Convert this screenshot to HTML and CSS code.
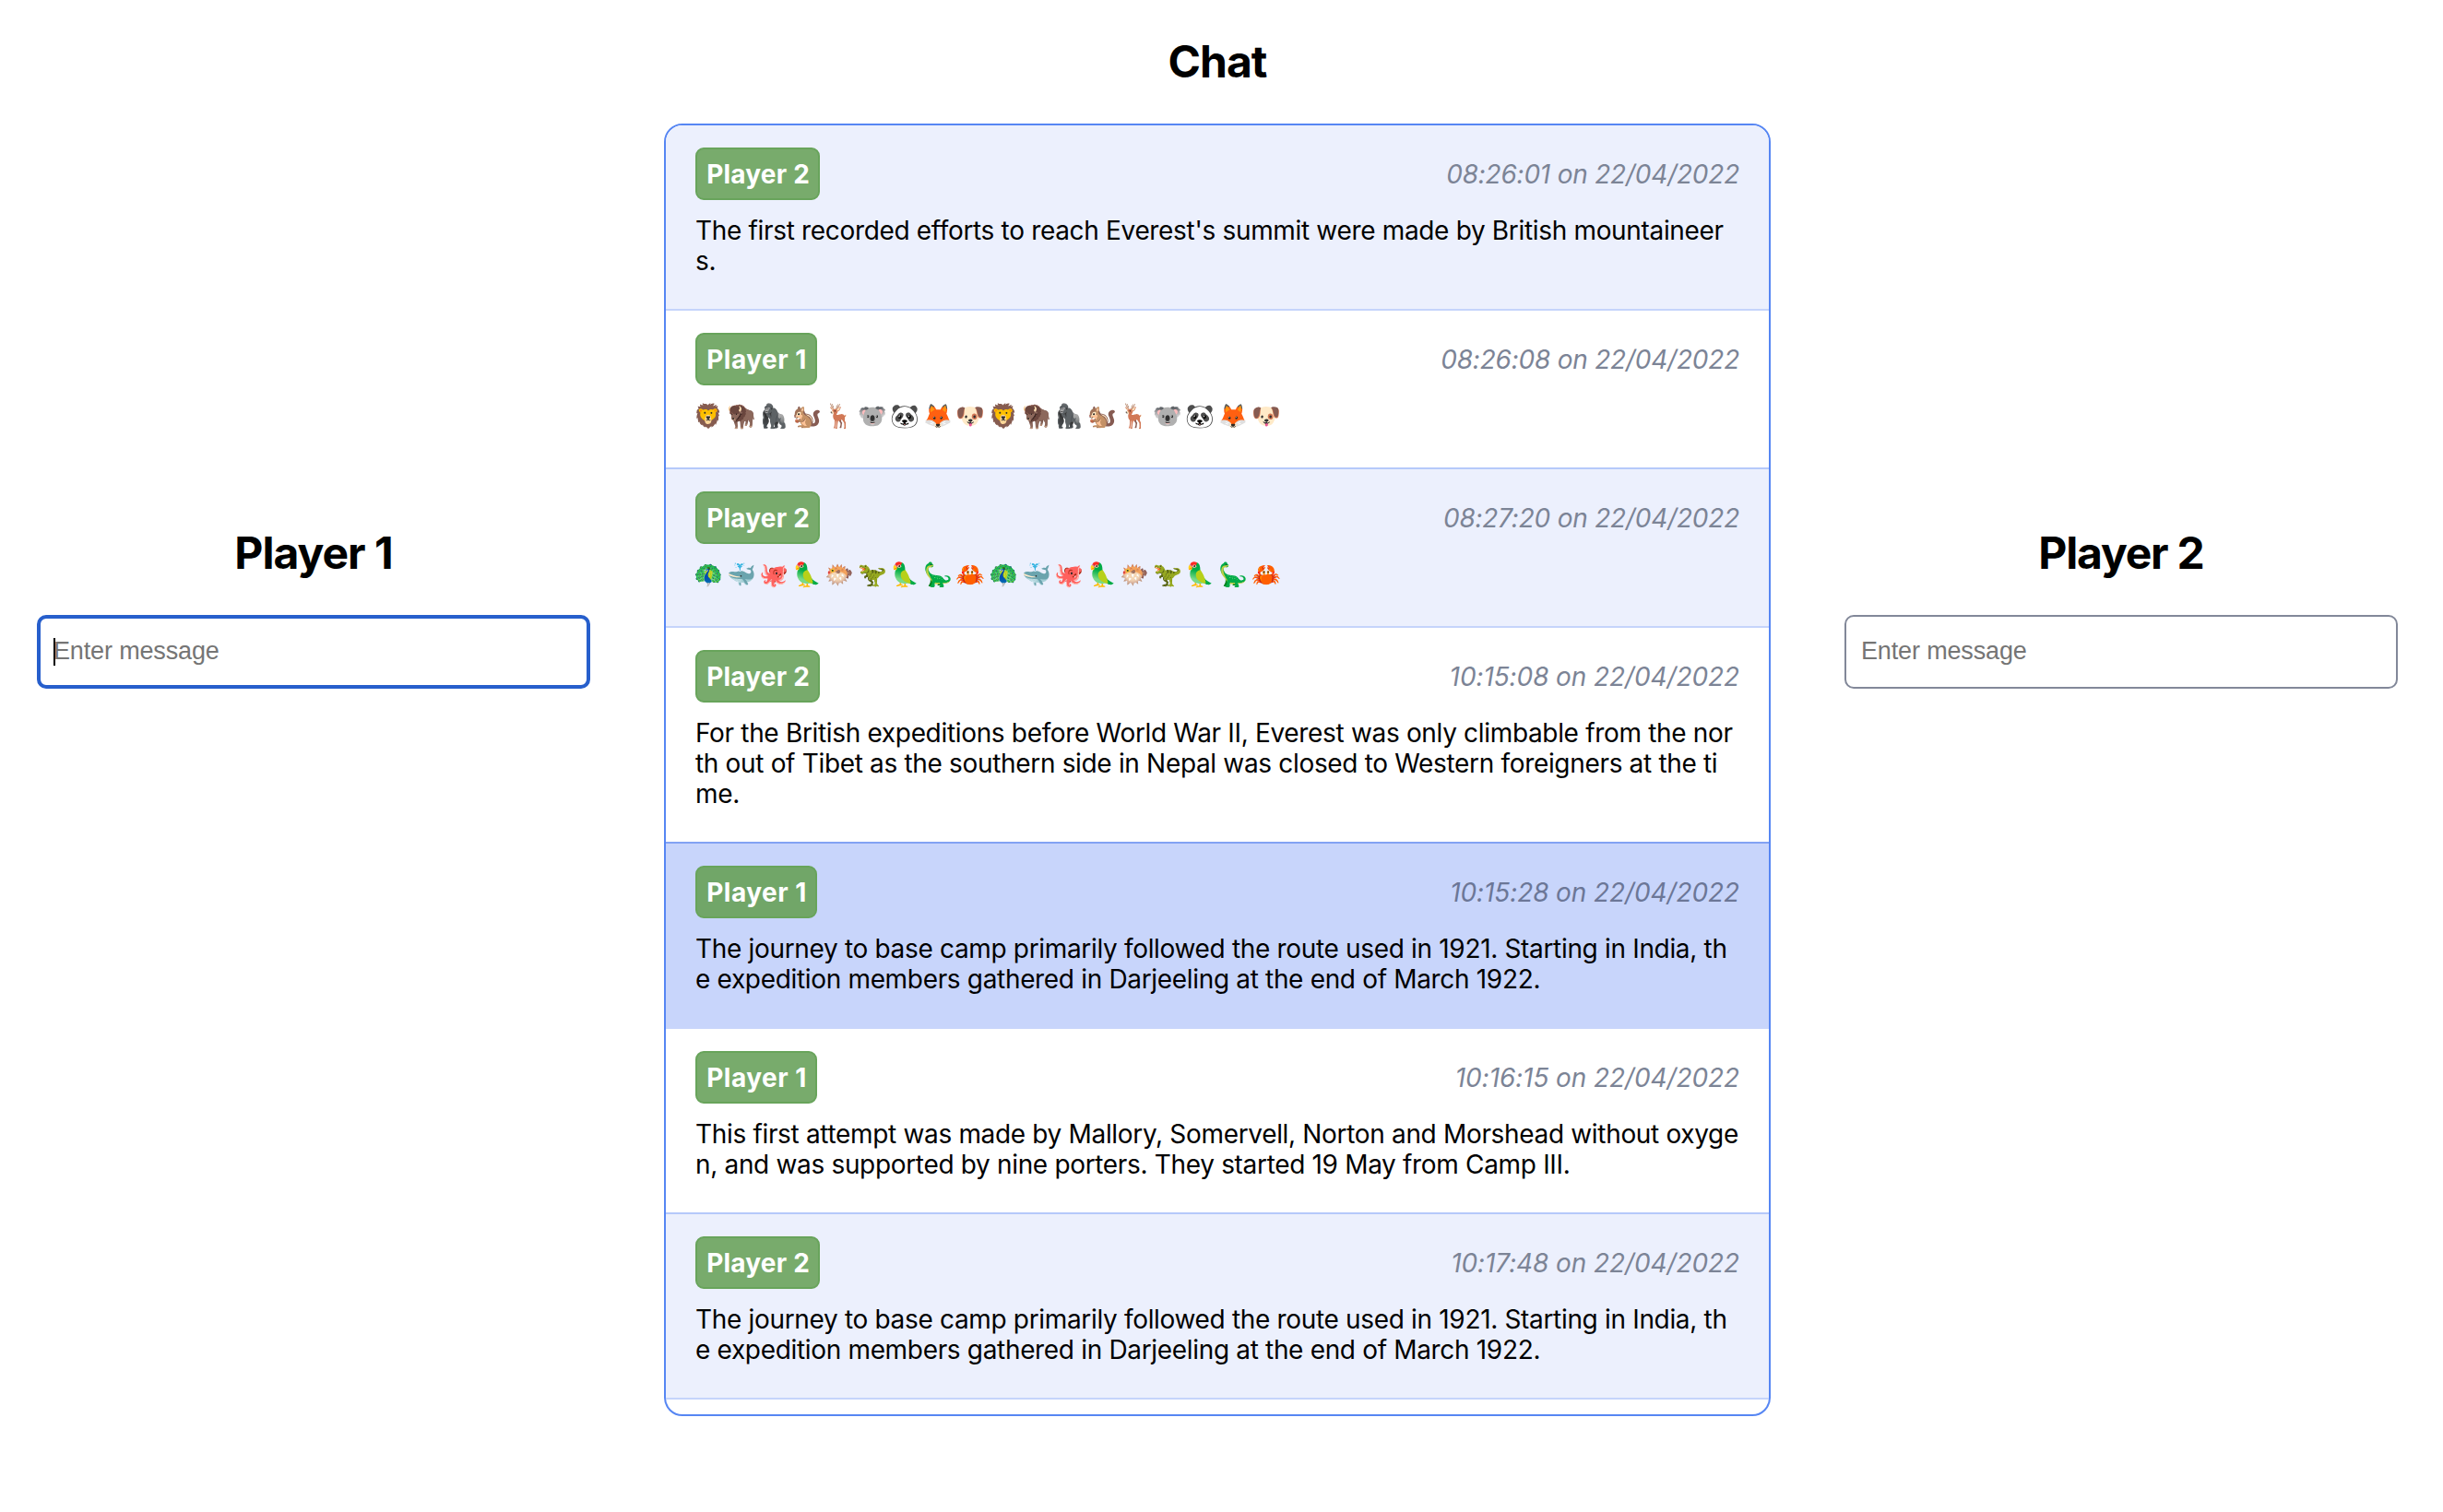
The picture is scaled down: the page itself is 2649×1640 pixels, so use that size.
FILE: index.html
```html
<!DOCTYPE html>
<html lang="en">
<head>
<meta charset="utf-8">
<title>Chat</title>
<link rel="stylesheet" href="styles.css">
</head>
<body>
<main class="layout">
  <section class="player player-one">
    <h2 class="heading">Player 1</h2>
    <div class="field focused"><input class="input" type="text" placeholder="Enter message"></div>
  </section>

  <section class="chat">
    <h2 class="heading chat-heading">Chat</h2>
    <div class="messages">
      <article class="message tinted">
        <header class="meta"><span class="badge">Player 2</span><time class="time">08:26:01 on 22/04/2022</time></header>
        <p class="text">The first recorded efforts to reach Everest's summit were made by British mountaineer<br>s.</p>
      </article>
      <article class="message">
        <header class="meta"><span class="badge badge-one">Player 1</span><time class="time">08:26:08 on 22/04/2022</time></header>
        <p class="text emoji">🦁🦬🦍🐿️🦌🐨🐼🦊🐶🦁🦬🦍🐿️🦌🐨🐼🦊🐶</p>
      </article>
      <article class="message tinted">
        <header class="meta"><span class="badge">Player 2</span><time class="time">08:27:20 on 22/04/2022</time></header>
        <p class="text emoji">🦚🐳🐙🦜🐡🦖🦜🦕🦀🦚🐳🐙🦜🐡🦖🦜🦕🦀</p>
      </article>
      <article class="message before-selected">
        <header class="meta"><span class="badge">Player 2</span><time class="time time-short">10:15:08 on 22/04/2022</time></header>
        <p class="text">For the British expeditions before World War II, Everest was only climbable from the nor<br>th out of Tibet as the southern side in Nepal was closed to Western foreigners at the ti<br>me.</p>
      </article>
      <article class="message selected">
        <header class="meta"><span class="badge badge-one">Player 1</span><time class="time time-short">10:15:28 on 22/04/2022</time></header>
        <p class="text">The journey to base camp primarily followed the route used in 1921. Starting in India, th<br>e expedition members gathered in Darjeeling at the end of March 1922.</p>
      </article>
      <article class="message">
        <header class="meta"><span class="badge badge-one">Player 1</span><time class="time time-short">10:16:15 on 22/04/2022</time></header>
        <p class="text">This first attempt was made by Mallory, Somervell, Norton and Morshead without oxyge<br>n, and was supported by nine porters. They started 19 May from Camp III.</p>
      </article>
      <article class="message tinted">
        <header class="meta"><span class="badge">Player 2</span><time class="time time-short">10:17:48 on 22/04/2022</time></header>
        <p class="text">The journey to base camp primarily followed the route used in 1921. Starting in India, th<br>e expedition members gathered in Darjeeling at the end of March 1922.</p>
      </article>
    </div>
  </section>

  <section class="player">
    <h2 class="heading heading-two">Player 2</h2>
    <div class="field"><input class="input" type="text" placeholder="Enter message"></div>
  </section>
</main>
</body>
</html>
```
FILE: styles.css
```css
* {
  box-sizing: border-box;
}

body {
  margin: 0;
  background: #fff;
  color: #000;
  font: 28px/33px Inter, sans-serif;
}

.layout {
  display: grid;
  grid-template-columns: 600px 1200px 600px;
  gap: 80px;
  align-items: start;
  padding: 38px 49px 0 40px;
}

.heading {
  margin: 0 0 38px;
  font-size: 48px;
  line-height: 58px;
  font-weight: 700;
  letter-spacing: -1px;
  text-align: center;
}

.heading-two {
  letter-spacing: -1.2px;
}

.player {
  padding-top: 533px;
}

.field {
  position: relative;
}

.input {
  display: block;
  width: 100%;
  height: 80px;
  padding: 0 16px 1px;
  border: 2px solid #828899;
  border-radius: 10px;
  background: #fff;
  font: 27px "Liberation Sans", sans-serif;
  letter-spacing: -0.15px;
}

.input::placeholder {
  color: #757575;
}

.focused .input {
  padding: 0 14px 1px;
  border: 4px solid #275fcc;
}

/* text cursor of the active field */
.focused::after {
  content: "";
  position: absolute;
  left: 18px;
  top: 25px;
  width: 2px;
  height: 30px;
  background: #000;
}

.messages {
  height: 1402px;
  overflow: hidden;
  border: 2px solid #5686f3;
  border-radius: 20px;
}

.message {
  padding: 24px 32px 35px;
  border-bottom: 2px solid #b5c9fa;
}

.tinted {
  background: #ecf0fd;
  border-color: #c5d4fb;
}

.before-selected {
  border-color: #82a2f3;
}

.selected {
  background: #c8d5fb;
  border-color: #c8d5fb;
}

.meta {
  display: flex;
  justify-content: space-between;
  align-items: center;
  margin-bottom: 17px;
}

.badge {
  padding: 1px 9px 0 10.2px;
  border: 2px solid #68a45b;
  border-radius: 9px;
  background: #78ab6c;
  color: #fff;
  font-weight: 700;
  line-height: 52px;
  letter-spacing: 0.2px;
}

.badge-one {
  letter-spacing: 0.5px;
}

.selected .badge {
  background: #71a668;
  border-color: #68a45b;
}

.time {
  padding-top: 2px;
  color: #7c8496;
  font-style: italic;
  letter-spacing: -0.22px;
}

.time-short {
  letter-spacing: -0.1px;
}

.selected .time {
  color: #6c7797;
}

.text {
  margin: 0;
  letter-spacing: -0.33px;
  white-space: nowrap;
}

.emoji {
  margin: -3px 0 3px -2px;
  font-size: 25.5px;
  line-height: 37px;
  letter-spacing: 3.56px;
}
```
